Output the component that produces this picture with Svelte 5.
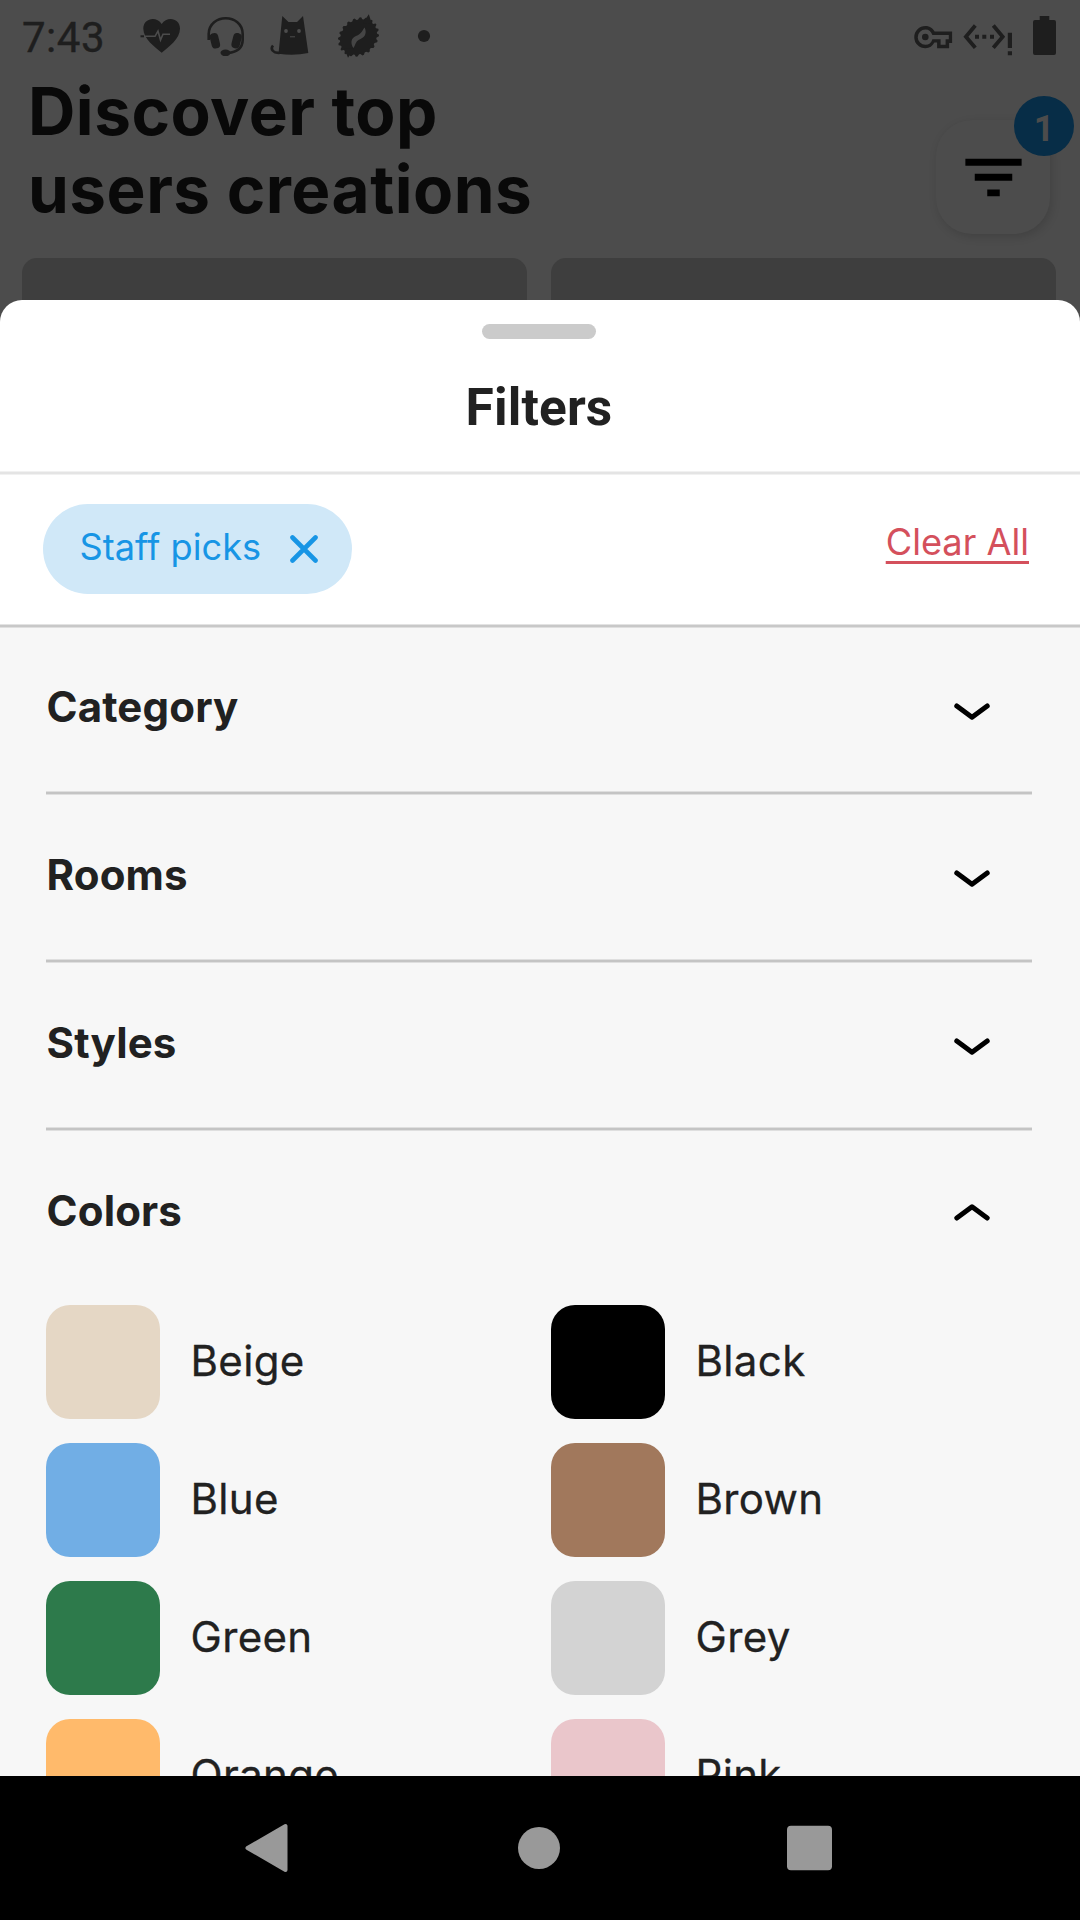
<script>
  const sections = ['Category', 'Rooms', 'Styles'];
  const colors = [
    { name: 'Beige', value: '#e5d7c5' },
    { name: 'Black', value: '#000000' },
    { name: 'Blue', value: '#71aee5' },
    { name: 'Brown', value: '#a1785c' },
    { name: 'Green', value: '#2d7a4b' },
    { name: 'Grey', value: '#d3d3d3' },
    { name: 'Orange', value: '#ffba6b' },
    { name: 'Pink', value: '#eac6cb' }
  ];

  // Toothed outline of the gear icon
  const teeth = Array.from({ length: 80 }, (_, i) => {
    const a = (i / 80) * Math.PI * 2;
    const r = i % 4 < 2 ? 21.8 : 19.6;
    return `${(358.5 + r * Math.cos(a)).toFixed(1)},${(37 + r * 0.84 * Math.sin(a)).toFixed(1)}`;
  }).join(' ');
</script>

<div class="screen">
  <div class="page">
    <div class="status">
      <span class="time">7:43</span>
      <div class="notifications">
        <svg viewBox="130 0 64 72" width="64" height="72">
          <path d="M161.700 52.700C155 47 143.300 39 143.300 28.500C143.300 18 156.500 15.500 161.700 24C167 15.500 180 18 180 28.500C180 39 168.500 47 161.700 52.700Z" />
          <path class="cut" d="M141 36.300H155L158 31L160.500 40L163 34.300H170" />
          <path class="line thin" d="M140.500 36.300H144" />
        </svg>
        <svg viewBox="194 0 64 72" width="64" height="72">
          <path class="line slim" d="M208.700 40V34C209 13 242.500 13 242.700 34V40C242.500 47 238 52 228 53" />
          <rect x="210.500" y="33" width="8.500" height="15.500" rx="4" transform="rotate(-14 215 40)" />
          <rect x="232.500" y="33" width="8.500" height="15.500" rx="4" transform="rotate(14 237 40)" />
          <ellipse cx="225.500" cy="52.800" rx="5" ry="3.300" />
        </svg>
        <svg viewBox="258 0 64 72" width="64" height="72">
          <path d="M282.300 16L288.500 22H297L303 16L308.300 53Q294 56 278.500 53.700Z" />
          <path class="line slim" d="M280 52.800C273 53.500 270 49 273 45.500" />
          <g class="hole">
            <circle cx="286" cy="31" r="1.900" />
            <circle cx="299" cy="31" r="1.900" />
            <rect x="290" y="36.300" width="5" height="1" />
          </g>
        </svg>
        <svg viewBox="322 0 70 72" width="70" height="72">
          <polygon points={teeth} transform="rotate(-38 358.500 37)" />
          <path d="M363 23L368.800 14.300L372 24ZM344 48L348 57.800L354 49Z" />
          <path class="hole soft" d="M364.500 27.500C367 32 365.500 37 360.500 39C356 40.500 356 43.500 353.500 48C350.500 44 350.500 38 356 36C361.500 34 362 31 364.500 27.500Z" />
        </svg>
        <svg viewBox="392 0 64 72" width="64" height="72"><circle cx="424" cy="36" r="6.100" /></svg>
      </div>
      <svg viewBox="912 0 150 72" width="150" height="72">
        <path transform="translate(.6 0)" fill-rule="evenodd" d="M924.800 26C929.500 26 932.500 28.500 934 31.500H951.500V43H948.500V48.300H936.500V42.600H933.800C932 46 929 48.300 924.800 48.300A11.100 11.100 0 0 1 924.800 26ZM924.800 29.500A7.600 7.600 0 0 0 924.800 44.800C928.500 44.800 930.600 43 931.800 39.300H940V44.800H945V39.300H948.200V35H931.800C930.500 31.500 928.500 29.500 924.800 29.500Z" />
        <circle cx="925.300" cy="37" r="3.300" />
        <path class="line angle" d="M975.300 25.500L965.900 36.700L975.300 47.800M993.300 25.500L1002.700 36.700L993.300 47.800" />
        <path d="M975 34.700h4v4h-4zM982.300 34.700h4v4h-4zM990 34.700h4v4h-4zM1007.800 32.700h4.200V48h-4.200zM1007.800 51.200h4.200v4h-4.200z" />
        <path d="M1039.700 16H1049.300V20H1054Q1056 20 1056 22V53Q1056 55 1054 55H1035Q1033 55 1033 53V22Q1033 20 1035 20H1039.700Z" />
      </svg>
    </div>

    <div class="hero">
      <h1>Discover top<br />users creations</h1>
      <div class="filter-button">
        <svg viewBox="0 0 24 24" width="75" height="75"><path d="M10 18h4v-2.200h-4v2.200zM3 6v2.200h18V6H3zm3 7h12v-2.200H6V13z" /></svg>
        <span class="badge">1</span>
      </div>
    </div>

    <div class="cards"><div></div><div></div></div>
  </div>

  <div class="sheet">
    <div class="sheet-head">
      <div class="handle"></div>
      <h2>Filters</h2>
    </div>
    <div class="rule pale"></div>
    <div class="active-filters">
      <div class="chip">
        <span>Staff picks</span>
        <svg viewBox="0 0 28 28" width="28" height="28"><path d="M2.500 2.500L25.500 25.500M25.500 2.500L2.500 25.500" /></svg>
      </div>
      <span class="clear">Clear All</span>
    </div>
    <div class="rule solid"></div>
    <div class="options">
      {#each sections as section}
        <div class="section">
          <h3>{section}</h3>
          <svg viewBox="0 0 36 18" width="36" height="18"><path d="M2.800 3L18 14.200L33.200 3" /></svg>
        </div>
        <div class="rule grey"></div>
      {/each}
      <div class="section open">
        <h3>Colors</h3>
        <svg viewBox="0 0 36 18" width="36" height="18"><path d="M2.800 15L18 3.800L33.200 15" /></svg>
      </div>
      <div class="colors">
        {#each colors as color}
          <div class="color">
            <span class="swatch" style="background: {color.value}"></span>
            <span class="name">{color.name}</span>
          </div>
        {/each}
      </div>
    </div>
  </div>

  <div class="nav">
    <svg viewBox="0 0 48 52" width="48" height="52"><path class="back" d="M2.500 26L40.500 4V48Z" /></svg>
    <svg viewBox="0 0 48 52" width="48" height="52"><circle cx="24" cy="26" r="21" /></svg>
    <svg viewBox="0 0 48 52" width="48" height="52"><rect x="2" y="3.800" width="45" height="44.500" rx="4" /></svg>
  </div>
</div>

<style>
  .screen {
    width: 1080px;
    height: 1920px;
    display: flex;
    flex-direction: column;
    overflow: hidden;
    background: #4c4c4c;
    font-family: Inter, Roboto, sans-serif;
    color: #212121;
  }
  svg {
    display: block;
    flex: none;
  }
  h1, h2, h3 {
    margin: 0;
    font-weight: 700;
  }

  .page {
    height: 300px;
    flex: none;
  }
  .status {
    height: 72px;
    display: flex;
    align-items: center;
    padding: 0 18px 0 22px;
    fill: #1e1e1e;
    color: #1e1e1e;
  }
  .time {
    width: 108px;
    font: 400 42px/72px Roboto, sans-serif;
    letter-spacing: 0.5px;
    padding-top: 4px;
    -webkit-text-stroke: 0.4px #1e1e1e;
  }
  .notifications {
    display: flex;
    margin-right: auto;
  }
  .line {
    fill: none;
    stroke: #1e1e1e;
    stroke-width: 3.2;
  }
  .slim {
    stroke-width: 2.6;
  }
  .thin {
    stroke-width: 2;
  }
  .angle {
    stroke-width: 3.8;
  }
  .cut {
    fill: none;
    stroke: #4c4c4c;
    stroke-width: 1.6;
  }
  .hole {
    fill: #4c4c4c;
  }
  .soft {
    opacity: 0.85;
  }

  .hero {
    height: 186px;
    display: flex;
    justify-content: space-between;
    padding: 0 30px 0 28px;
  }
  h1 {
    font-size: 65.6px;
    line-height: 78px;
    letter-spacing: 0.5px;
    color: #090909;
  }
  .filter-button {
    position: relative;
    width: 114px;
    height: 114px;
    margin-top: 48px;
    border-radius: 36px;
    display: flex;
    align-items: center;
    justify-content: center;
    background: #4c4c4c;
    box-shadow: 2px 3px 10px rgba(0, 0, 0, 0.14);
  }
  .badge {
    position: absolute;
    top: -24px;
    right: -24px;
    width: 60px;
    height: 60px;
    border-radius: 50%;
    background: #072d47;
    color: #4c4c4c;
    font: 700 36px/66px Roboto, sans-serif;
    text-align: center;
  }
  .cards {
    height: 42px;
    display: grid;
    grid-template-columns: 1fr 1fr;
    gap: 24px;
    padding: 0 24px 0 22px;
  }
  .cards div {
    border-radius: 15px 15px 0 0;
    background: #3e3e3e;
  }

  .sheet {
    height: 1476px;
    flex: none;
    overflow: hidden;
    border-radius: 22px 22px 0 0;
    background: #fff;
  }
  .sheet-head {
    height: 171px;
    box-sizing: border-box;
    padding: 24px 2px 0 0;
    display: flex;
    flex-direction: column;
    align-items: center;
  }
  .handle {
    width: 114px;
    height: 15px;
    border-radius: 8px;
    background: #cbcbcb;
  }
  h2 {
    margin-top: 39px;
    font: 700 51.400px/60px Roboto, sans-serif;
    letter-spacing: 0.15px;
  }
  .rule {
    height: 4px;
  }
  .pale {
    background: linear-gradient(#f1f1f1 1px, #e4e4e4 1px 3px, #f1f1f1 3px);
  }
  .solid {
    background: linear-gradient(#e3e3e3 1px, #c8c8c8 1px 3px, #dfdfdf 3px);
  }
  .grey {
    background: linear-gradient(#dfdfdf 1px, #c4c4c4 1px 3px, #dfdfdf 3px);
  }
  .active-filters {
    height: 149px;
    display: flex;
    align-items: center;
    justify-content: space-between;
    padding: 0 51px 0 43px;
  }
  .chip {
    width: 308.500px;
    height: 90px;
    margin-top: -1px;
    box-sizing: border-box;
    padding: 0 34px 0 36.500px;
    border-radius: 45px;
    display: flex;
    align-items: center;
    justify-content: space-between;
    background: #d0e8f8;
    color: #1795e5;
    font-size: 36.200px;
  }
  .chip span {
    margin-top: -4px;
  }
  .chip svg {
    stroke: #1795e5;
    stroke-width: 4.6;
    stroke-linecap: round;
  }
  .clear {
    margin-top: -15px;
    color: #d4505c;
    font-size: 36.200px;
    line-height: 44px;
    height: 44px;
    text-decoration: underline;
    text-decoration-thickness: 3px;
    text-underline-offset: 6px;
    text-decoration-skip-ink: none;
  }

  .options {
    height: 1148px;
    overflow: hidden;
    padding: 0 48px 0 46px;
    background: #f7f7f7;
  }
  .section {
    height: 164px;
    display: flex;
    align-items: center;
    justify-content: space-between;
    padding-right: 42px;
  }
  .section:first-child {
    height: 163px;
  }
  h3 {
    font-size: 42px;
    line-height: 50px;
    letter-spacing: 0.15px;
    margin: -4px 0 0 0.5px;
  }
  .section:first-child h3 {
    margin-top: -5px;
  }
  .section svg {
    margin-top: 4px;
    fill: none;
    stroke: #000;
    stroke-width: 5;
    stroke-linecap: round;
    stroke-linejoin: round;
  }
  .open {
    height: 174px;
    align-items: flex-start;
    padding-top: 0;
  }
  .open h3 {
    margin-top: 55px;
  }
  .open svg {
    margin-top: 72px;
  }
  .colors {
    display: grid;
    grid-template-columns: 505px 1fr;
    row-gap: 24px;
  }
  .color {
    display: flex;
    align-items: center;
    gap: 30.500px;
    font-size: 42px;
    letter-spacing: 0.35px;
  }
  .name {
    margin-top: -4px;
    font-weight: 400;
    -webkit-text-stroke: 0.3px #212121;
  }
  .swatch {
    width: 114px;
    height: 114px;
    border-radius: 24px;
  }

  .nav {
    height: 144px;
    flex: none;
    display: flex;
    align-items: center;
    justify-content: center;
    gap: 222px;
    padding-right: 2px;
    box-sizing: border-box;
    background: #000;
    fill: #999;
  }
  .back {
    stroke: #999;
    stroke-width: 4;
    stroke-linejoin: round;
  }
</style>
